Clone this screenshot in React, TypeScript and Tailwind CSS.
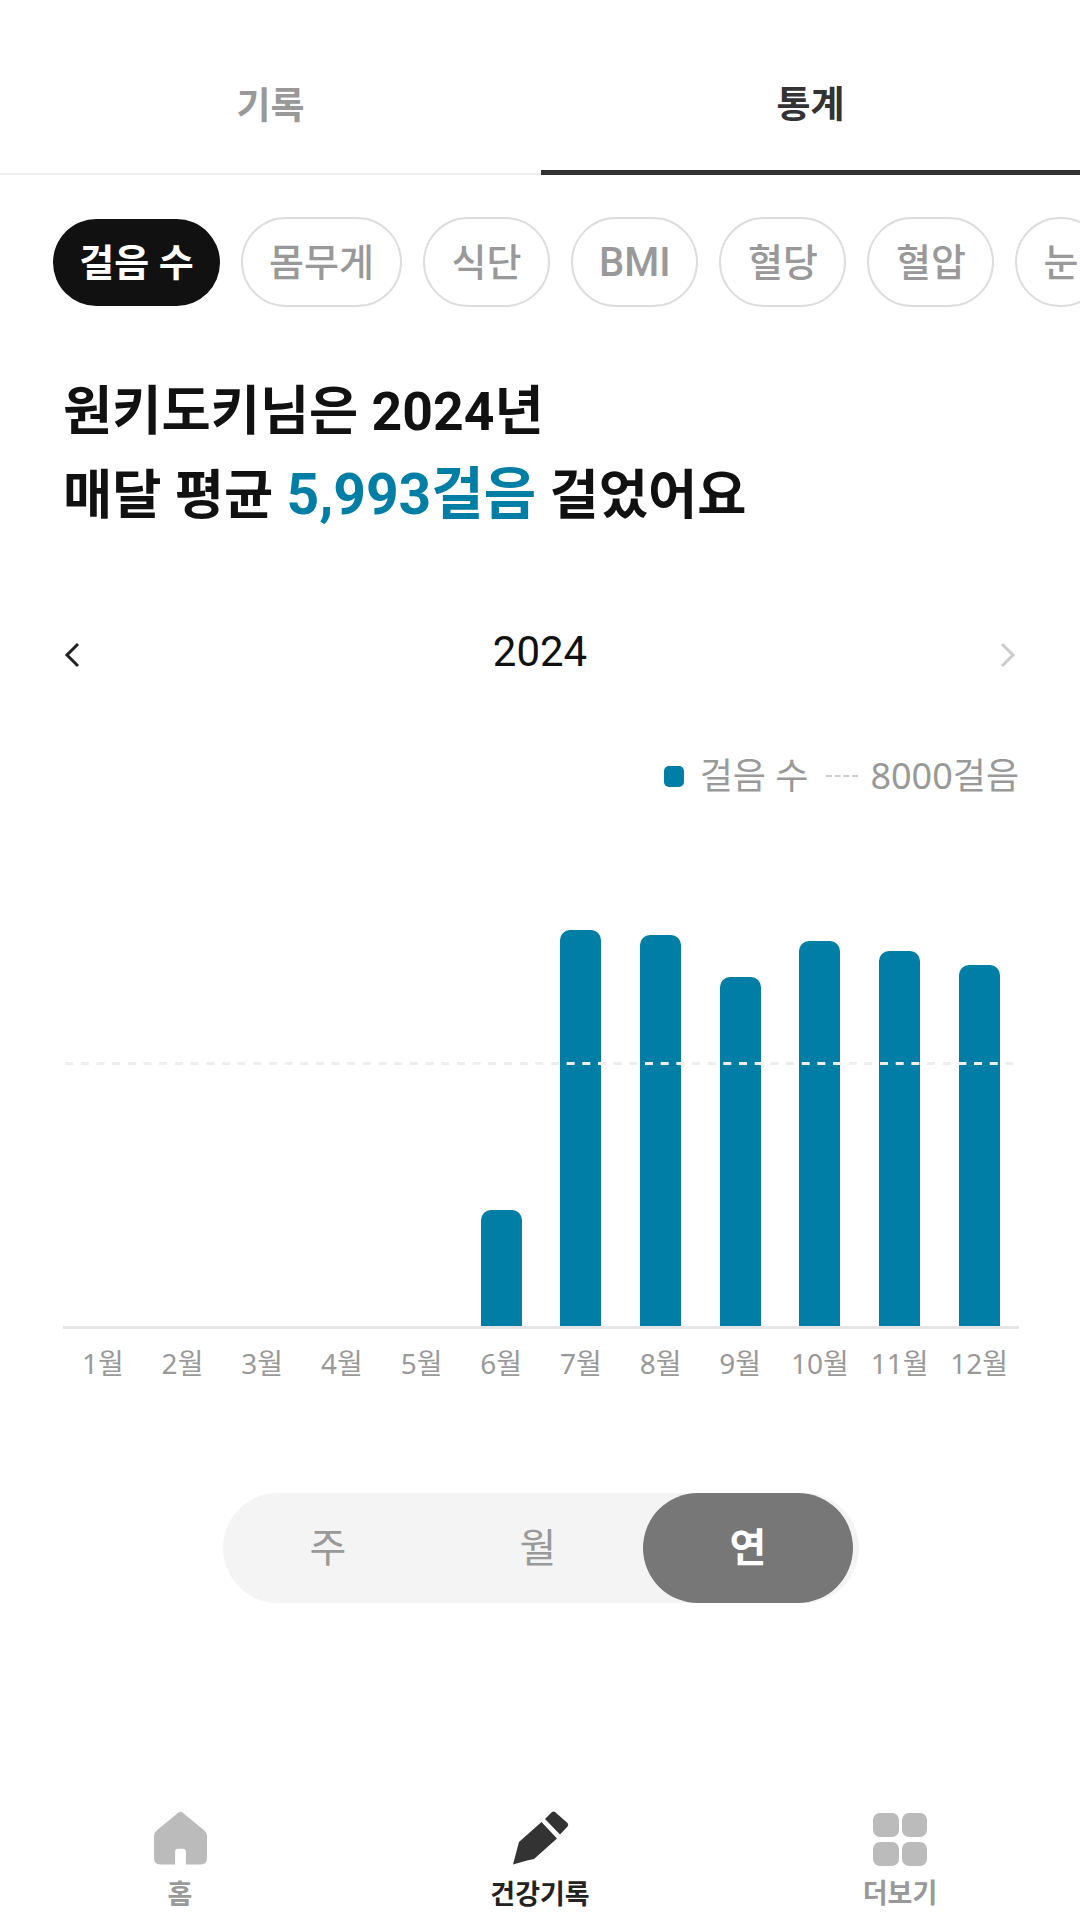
const pills = ["몸무게", "식단", "BMI", "혈당", "혈압"];
const months = [
  { label: "1월", top: 0 },
  { label: "2월", top: 0 },
  { label: "3월", top: 0 },
  { label: "4월", top: 0 },
  { label: "5월", top: 0 },
  { label: "6월", top: 116 },
  { label: "7월", top: 396 },
  { label: "8월", top: 391 },
  { label: "9월", top: 349 },
  { label: "10월", top: 385 },
  { label: "11월", top: 375 },
  { label: "12월", top: 361 },
];

const HomeIcon = () => (
  <svg width="53" height="54" viewBox="0 0 54 54" className="block">
    <path
      d="M25 1 Q27 -0.5 29 1 L51 19 Q54 21.5 54 25 V47 Q54 54 47 54 H32.5 V41 Q32.5 38 29.5 38 H24.5 Q21.5 38 21.5 41 V54 H7 Q0 54 0 47 V25 Q0 21.5 3 19 Z"
      fill="#bbbbbb"
    />
  </svg>
);

const PenIcon = () => (
  <svg width="56" height="54" viewBox="0 0 56 54" className="block ml-[2px]">
    <path d="M28.5 11 L44 27.5 L21 48 L14 49.5 L0 53.5 L4 38.5 L6 31 Z" fill="#333333" />
    <path d="M32 8 L39 1 Q40.5 0 42 1 L54.5 12 Q56 13.5 54.5 15.5 L47 23.5 Z" fill="#333333" />
  </svg>
);

const GridIcon = () => (
  <div className="grid grid-cols-2 gap-x-[3px] gap-y-[5px] w-[54px] mt-[2px]">
    <div className="h-[24px] rounded-[7px] bg-[#bbbbbb]" />
    <div className="h-[24px] rounded-[7px] bg-[#bbbbbb]" />
    <div className="h-[24px] rounded-[7px] bg-[#bbbbbb]" />
    <div className="h-[24px] rounded-[7px] bg-[#bbbbbb]" />
  </div>
);

export default function App() {
  return (
    <div className="w-[1080px] h-[1925px] bg-white overflow-hidden flex flex-col font-['Noto_Sans','Noto_Sans_CJK_KR',sans-serif]">
      {/* tabs */}
      <div className="flex h-[175px] pt-[70px]">
        <div className="w-[541px] border-b-[2px] border-[#eeeeee] text-center text-[37px] leading-[70px] font-bold text-[#999999]">
          기록
        </div>
        <div className="flex-1 border-b-[5px] border-[#333333] text-center text-[37px] leading-[68px] font-bold text-[#333333]">
          통계
        </div>
      </div>

      {/* category pills */}
      <div className="flex items-center gap-[21px] pl-[53px] mt-[42px] h-[90px] overflow-hidden text-[38px] font-medium whitespace-nowrap font-['Roboto','Noto_Sans_CJK_KR',sans-serif]">
        <div className="h-[87px] w-[167px] shrink-0 rounded-full bg-[#111111] text-white font-semibold flex items-center justify-center pt-[2px]">
          걸음 수
        </div>
        {pills.map((p) => (
          <div
            key={p}
            className={`h-[90px] min-w-[127px] px-[26px] shrink-0 rounded-full border-2 border-[#dddddd] text-[#999999] flex items-center justify-center pt-[2px] ${p === "BMI" ? "text-[40px]" : ""}`}
          >
            {p}
          </div>
        ))}
        <div className="h-[90px] px-[26px] shrink-0 rounded-full border-2 border-[#dddddd] text-[#999999] flex items-center justify-center pt-[2px]">
          눈
        </div>
      </div>

      {/* headline */}
      <div className="mt-[63px] pl-[63px] text-[53.5px] leading-[83px] font-bold text-[#111111] font-['Roboto','Noto_Sans_CJK_KR',sans-serif]">
        <div>원키도키님은 2024년</div>
        <div>
          매달 평균 <span className="text-[57px] text-[#017ea5]">5,993걸음</span> 걸었어요
        </div>
      </div>

      {/* year selector */}
      <div className="mt-[86px] pl-[64px] pr-[64px] flex items-center justify-between h-[60px]">
        <svg width="16" height="26" viewBox="0 0 16 26" fill="none" stroke="#222222" strokeWidth="3" className="mt-[4px]">
          <path d="M14 2 L3 13 L14 24" />
        </svg>
        <div className="text-[42px] mb-[4px] text-[#111111] font-['Roboto',sans-serif]">2024</div>
        <svg width="16" height="26" viewBox="0 0 16 26" fill="none" stroke="#cccccc" strokeWidth="3" className="mt-[4px]">
          <path d="M2 2 L13 13 L2 24" />
        </svg>
      </div>

      {/* legend */}
      <div className="mt-[69px] pr-[61px] flex items-center justify-end text-[36px] leading-[48px] text-[#999999]">
        <div className="w-[20px] h-[21px] rounded-[5px] bg-[#017ea5] mr-[16px]" />
        <span>걸음 수</span>
        <div className="w-[32px] border-t-2 border-dashed border-[#cccccc] ml-[18px] mr-[12px]" />
        <span>8000걸음</span>
      </div>

      {/* chart */}
      <div className="relative mx-[63px] mt-[131px] w-[956px] h-[398px] flex items-end border-b-[3px] border-[#e5e5e5]">
        {months.map((m) => (
          <div key={m.label} className="flex-1 flex justify-center">
            {m.top > 0 && (
              <div className="w-[41px] rounded-t-[10px] bg-[#017ea5]" style={{ height: m.top }} />
            )}
          </div>
        ))}
        <svg className="absolute left-0 top-[131px]" width="956" height="3">
          <line x1="0" y1="1.5" x2="956" y2="1.5" stroke="#eeeeee" strokeWidth="3" strokeDasharray="8 7.67" strokeDashoffset="-2.2" />
        </svg>
      </div>
      <div className="mx-[63px] w-[956px] mt-[14px] flex text-[28px] leading-[40px] text-[#999999]">
        {months.map((m) => (
          <div key={m.label} className="flex-1 text-center">
            {m.label}
          </div>
        ))}
      </div>

      {/* period switch */}
      <div className="mt-[110px] ml-[223px] w-[636px] h-[110px] rounded-full bg-[#f4f4f4] flex items-center pr-[6px] text-[40px] text-[#999999]">
        <div className="w-[210px] text-center pb-[3px]">주</div>
        <div className="w-[210px] text-center pb-[3px]">월</div>
        <div className="w-[210px] h-full rounded-full bg-[#777777] text-white font-bold flex items-center justify-center pb-[3px]">
          연
        </div>
      </div>

      {/* bottom nav */}
      <div className="mt-auto h-[120px] pt-[6px] flex text-[27px] font-bold">
        <div className="w-[360px] flex flex-col items-center text-[#999999]">
          <HomeIcon />
          <div className="mt-[9px] leading-[40px]">홈</div>
        </div>
        <div className="w-[360px] flex flex-col items-center text-[#222222]">
          <PenIcon />
          <div className="mt-[9px] leading-[40px]">건강기록</div>
        </div>
        <div className="w-[360px] flex flex-col items-center text-[#999999]">
          <GridIcon />
          <div className="mt-[7px] leading-[40px]">더보기</div>
        </div>
      </div>
    </div>
  );
}
